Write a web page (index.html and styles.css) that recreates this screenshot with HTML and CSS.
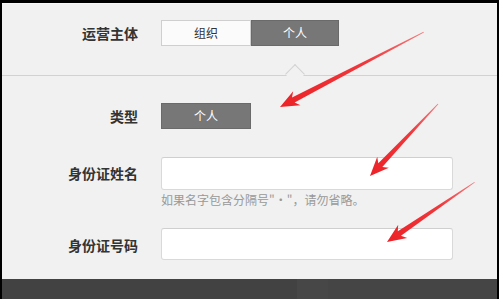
FILE: index.html
```html
<!DOCTYPE html>
<html lang="zh-CN">
<head>
<meta charset="utf-8">
<title>运营主体</title>
<link rel="stylesheet" href="styles.css">
</head>
<body>
<div class="frame">
  <div class="panel">
    <div class="row row-subject">
      <div class="label">运营主体</div>
      <div class="seg">
        <span class="seg-btn">组织</span>
        <span class="seg-btn is-active">个人</span>
      </div>
    </div>
    <div class="divider"><span class="caret"></span></div>
    <div class="row row-type">
      <div class="label">类型</div>
      <span class="type-btn">个人</span>
    </div>
    <div class="row row-name">
      <div class="label label-input">身份证姓名</div>
      <div class="field">
        <div class="input"></div>
        <div class="hint">如果名字包含分隔号"·"，请勿省略。</div>
      </div>
    </div>
    <div class="row row-id">
      <div class="label label-input2">身份证号码</div>
      <div class="field">
        <div class="input input2"></div>
      </div>
    </div>
  </div>
  <div class="footer">
    <span class="foot-a"></span>
    <span class="foot-b"></span>
    <span class="foot-c"></span>
  </div>
  <svg class="arrows" width="499" height="299" viewBox="0 0 499 299">
    <defs>
      <linearGradient id="ag" x1="0" y1="0" x2="1" y2="0">
        <stop offset="0" stop-color="#ec2227"/>
        <stop offset="0.6" stop-color="#f0383c"/>
        <stop offset="1" stop-color="#f47a7c"/>
      </linearGradient>
    </defs>
    <g transform="translate(280 107) rotate(-27.5)">
      <polygon fill="url(#ag)" points="0,0 19,-8 15,-2.8 162,-0.4 162,0.4 15,2.8 19,8"/>
    </g>
    <g transform="translate(370 176) rotate(-46.6)">
      <polygon fill="url(#ag)" points="0,0 19,-8 15,-2.8 99,-0.4 99,0.4 15,2.8 19,8"/>
    </g>
    <g transform="translate(387 242) rotate(-34.3)">
      <polygon fill="url(#ag)" points="0,0 19,-8 15,-2.8 106,-0.4 106,0.4 15,2.8 19,8"/>
    </g>
  </svg>
</div>
</body>
</html>
```

FILE: styles.css
```css
html, body {
  margin: 0;
  padding: 0;
  background: #000;
}

.frame {
  position: relative;
  width: 499px;
  height: 299px;
  box-sizing: border-box;
  padding: 3px 2px 0 2px;
  display: flex;
  flex-direction: column;
  font-family: "Noto Sans CJK SC", "Noto Sans", sans-serif;
}

.panel {
  flex: 1;
  background: #f1f1f1;
  border-top: 1px solid #f8f8f8;
  box-sizing: border-box;
  padding-top: 16px;
}

.row {
  display: flex;
  align-items: flex-start;
}

.label {
  width: 136px;
  margin-right: 23px;
  text-align: right;
  font-size: 14px;
  font-weight: bold;
  color: #333;
  height: 26px;
  line-height: 26px;
}

.seg {
  display: flex;
}

.seg-btn {
  width: 88px;
  height: 24px;
  line-height: 24px;
  text-align: center;
  font-size: 12px;
  color: #333;
  background: #fbfbfb;
  border: 1px solid #cfcfcf;
}

.seg-btn.is-active {
  width: 86px;
  background: #777;
  border-color: #6a6a6a;
  color: #fff;
}

.divider {
  position: relative;
  height: 1px;
  background: #d2d2d2;
  margin-top: 29px;
}

.caret {
  position: absolute;
  left: 286px;
  top: -8px;
  width: 14px;
  height: 14px;
  box-sizing: border-box;
  background: #f1f1f1;
  border-top: 1px solid #d2d2d2;
  border-left: 1px solid #d2d2d2;
  transform: rotate(45deg);
}

.row-type {
  margin-top: 27px;
}

.type-btn {
  width: 88px;
  height: 24px;
  line-height: 24px;
  text-align: center;
  font-size: 12px;
  color: #fff;
  background: #777;
  border: 1px solid #6a6a6a;
}

.row-name {
  margin-top: 28px;
}

.label-input {
  height: 33px;
  line-height: 33px;
}

.label-input2 {
  height: 32px;
  line-height: 34px;
}

.field {
  display: flex;
  flex-direction: column;
}

.input {
  width: 292px;
  height: 33px;
  box-sizing: border-box;
  background: #fff;
  border: 1px solid #d9d9d9;
  border-top-color: #cfcfcf;
  border-radius: 3px;
}

.input2 {
  height: 32px;
}

.hint {
  margin-top: 2px;
  height: 16px;
  line-height: 16px;
  font-size: 12px;
  color: #999;
}

.row-id {
  margin-top: 20px;
}

.footer {
  height: 20px;
  display: flex;
  background: #424242;
}

.foot-a {
  width: 295px;
}

.foot-b {
  width: 31px;
  background: #474747;
}

.foot-c {
  flex: 1;
  background: #454545;
}

.arrows {
  position: absolute;
  left: 0;
  top: 0;
  pointer-events: none;
}
```
